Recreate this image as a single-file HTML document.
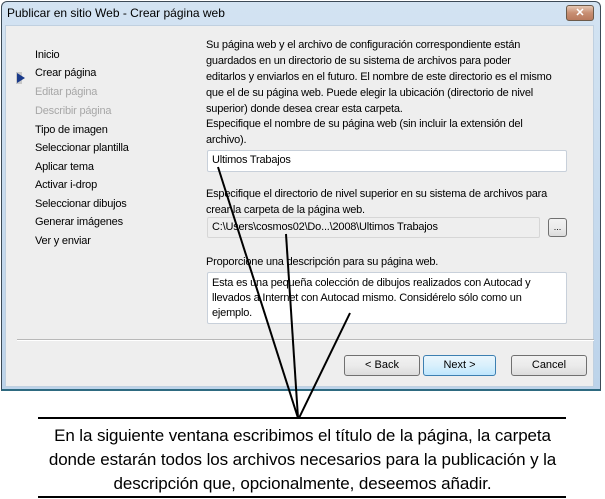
<!DOCTYPE html>
<html><head><meta charset="utf-8"><style>
*{margin:0;padding:0;box-sizing:border-box}
body{width:605px;height:499px;background:#fff;position:relative;overflow:hidden;font-family:"Liberation Sans",sans-serif}
.win{position:absolute;left:1px;top:1px;width:600px;height:390px;background:linear-gradient(#d3e3f2,#bcd3ea);border:1px solid #3c4a56;border-radius:6px 6px 0 0;border-bottom:2px solid #2e6a80}
.title{position:absolute;left:7px;top:6px;font-size:12px;color:#000}
.close{position:absolute;left:566px;top:5px;width:28px;height:16px;border:1px solid #6b5a4a;border-radius:3px;background:linear-gradient(#e6c8b4,#c88e72 50%,#b87a5e);color:#fff;font-size:11px;text-align:center;line-height:14px;font-weight:bold}
.client{position:absolute;left:5px;top:25px;width:589px;height:362px;background:#eeeeee;border:1px solid #c0d0e0}
.t{position:absolute;font-size:11px;color:#000;white-space:nowrap;letter-spacing:-0.2px}
.g{color:#a7a7a7}
.box{position:absolute;background:#fff;border:1px solid #c8d0da;border-radius:2px}
.btn{position:absolute;height:21px;border:1px solid #707070;border-radius:3px;background:linear-gradient(#f2f2f2,#ebebeb 50%,#dcdcdc);font-size:11px;text-align:center;line-height:19px}
.cap{position:absolute;left:0;width:605px;text-align:center;font-size:17px;color:#000;letter-spacing:-0.1px}
</style></head><body>
<div class="win"></div>
<div class="title">Publicar en sitio Web - Crear página web</div>
<div class="close">✕</div>
<div class="client"></div>
<div style="position:absolute;left:16px;top:72px;width:6px;height:12px;background:#c8c8c8"></div>
<div style="position:absolute;left:17px;top:73px;width:0;height:0;border-left:8px solid #1a3a8a;border-top:5px solid transparent;border-bottom:5px solid transparent"></div>
<div class="t" style="left:35px;top:49px">Inicio</div>
<div class="t" style="left:35px;top:67px">Crear página</div>
<div class="t g" style="left:35px;top:86px">Editar página</div>
<div class="t g" style="left:35px;top:105px">Describir página</div>
<div class="t" style="left:35px;top:124px">Tipo de imagen</div>
<div class="t" style="left:35px;top:142px">Seleccionar plantilla</div>
<div class="t" style="left:35px;top:161px">Aplicar tema</div>
<div class="t" style="left:35px;top:179px">Activar i-drop</div>
<div class="t" style="left:35px;top:198px">Seleccionar dibujos</div>
<div class="t" style="left:35px;top:216px">Generar imágenes</div>
<div class="t" style="left:35px;top:235px">Ver y enviar</div>

<div class="t" style="left:206px;top:37px;line-height:16px">Su página web y el archivo de configuración correspondiente están<br>guardados en un directorio de su sistema de archivos para poder<br>editarlos y enviarlos en el futuro. El nombre de este directorio es el mismo<br>que el de su página web. Puede elegir la ubicación (directorio de nivel<br>superior) donde desea crear esta carpeta.</div>
<div class="t" style="left:206px;top:116px;line-height:16px">Especifique el nombre de su página web (sin incluir la extensión del<br>archivo).</div>
<div class="box" style="left:207px;top:150px;width:360px;height:22px"></div>
<div class="t" style="left:212px;top:154px">Ultimos Trabajos</div>
<div class="t" style="left:206px;top:186px;line-height:16px">Especifique el directorio de nivel superior en su sistema de archivos para<br>crear la carpeta de la página web.</div>
<div class="box" style="left:207px;top:217px;width:333px;height:21px;background:#eeeeee;border-color:#d6d6d6"></div>
<div class="t" style="left:212px;top:221px">C:\Users\cosmos02\Do...\2008\Ultimos Trabajos</div>
<div class="btn" style="left:548px;top:218px;width:19px;height:19px;line-height:17px;font-size:9px">...</div>
<div class="t" style="left:206px;top:256px">Proporcione una descripción para su página web.</div>
<div class="box" style="left:207px;top:272px;width:360px;height:52px"></div>
<div class="t" style="left:212px;top:276px;line-height:15px">Esta es una pequeña colección de dibujos realizados con Autocad y<br>llevados a Internet con Autocad mismo. Considérelo sólo como un<br>ejemplo.</div>
<div style="position:absolute;left:17px;top:339px;width:577px;height:2px;background:#b8b8b8;border-bottom:1px solid #fff"></div>
<div class="btn" style="left:344px;top:355px;width:76px">&lt; Back</div>
<div class="btn" style="left:423px;top:355px;width:73px;border-color:#3c7fb1;background:linear-gradient(#eaf6fd,#d9f0fc 50%,#bee6fd)">Next &gt;</div>
<div class="btn" style="left:511px;top:355px;width:76px">Cancel</div>

<svg style="position:absolute;left:0;top:0" width="605" height="499">
<g stroke="#000" stroke-width="2" fill="none">
<line x1="218" y1="167" x2="298" y2="418"/>
<line x1="286" y1="234" x2="298" y2="418"/>
<line x1="350" y1="313" x2="299" y2="418"/>
<line x1="38" y1="418" x2="566" y2="418"/>
<line x1="38" y1="497" x2="566" y2="497"/>
</g></svg>
<div class="cap" style="top:426px">En la siguiente ventana escribimos el título de la página, la carpeta</div>
<div class="cap" style="top:450px">donde estarán todos los archivos necesarios para la publicación y la</div>
<div class="cap" style="top:474px">descripción que, opcionalmente, deseemos añadir.</div>
</body></html>
